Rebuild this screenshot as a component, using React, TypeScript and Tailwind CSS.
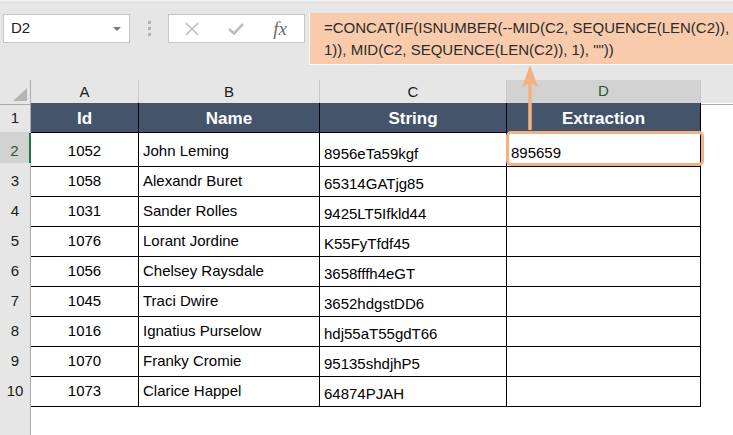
import React from "react";

type Person = {
  id: number;
  name: string;
  str: string;
  extraction: string;
};

const rows: Person[] = [
  { id: 1052, name: "John Leming", str: "8956eTa59kgf", extraction: "895659" },
  { id: 1058, name: "Alexandr Buret", str: "65314GATjg85", extraction: "" },
  { id: 1031, name: "Sander Rolles", str: "9425LT5Ifkld44", extraction: "" },
  { id: 1076, name: "Lorant Jordine", str: "K55FyTfdf45", extraction: "" },
  { id: 1056, name: "Chelsey Raysdale", str: "3658fffh4eGT", extraction: "" },
  { id: 1045, name: "Traci Dwire", str: "3652hdgstDD6", extraction: "" },
  { id: 1016, name: "Ignatius Purselow", str: "hdj55aT55gdT66", extraction: "" },
  { id: 1070, name: "Franky Cromie", str: "95135shdjhP5", extraction: "" },
  { id: 1073, name: "Clarice Happel", str: "64874PJAH", extraction: "" },
];

const cols = "grid grid-cols-[31px_108px_181px_187px_194px_1fr]";

const Toolbar = () => (
  <div className="h-[80px] bg-[#e6e6e6] relative">
    <div className="h-[3px] bg-gradient-to-b from-[#f7f7f7] to-[#dcdcdc]" />
    <div className="flex items-start pt-[11px] pl-[3px]">
      {/* name box */}
      <div className="w-[127px] h-[29px] bg-white border border-[#c6c6c6] flex items-center justify-between pl-[7px] pr-[8px] text-[15px] text-[#222]">
        <span>D2</span>
        <svg width="8" height="4" viewBox="0 0 8 4">
          <polygon points="0,0 8,0 4,4" fill="#777" />
        </svg>
      </div>
      <div className="w-[38px] h-[29px] flex flex-col items-center justify-center gap-[3px]">
        <div className="w-[3px] h-[3px] bg-[#b3b3b3]" />
        <div className="w-[3px] h-[3px] bg-[#b3b3b3]" />
        <div className="w-[3px] h-[3px] bg-[#b3b3b3]" />
      </div>
      {/* cancel / enter / fx */}
      <div className="w-[137px] h-[29px] bg-white border border-[#c6c6c6] flex items-center">
        <div className="w-[45px] flex justify-center">
          <svg width="14" height="14" viewBox="0 0 14 14">
            <path d="M1 1L13 13M13 1L1 13" stroke="#bdbdbd" strokeWidth="1.6" />
          </svg>
        </div>
        <div className="w-[44px] flex justify-center">
          <svg width="16" height="12" viewBox="0 0 16 12">
            <path d="M1 6L6 10.5L15 1" stroke="#bdbdbd" strokeWidth="2.6" fill="none" />
          </svg>
        </div>
        <div className="w-[44px] flex justify-center">
          <span className="font-['Liberation_Serif',serif] italic text-[19px] text-[#6b6b6b] leading-none">
            fx
          </span>
        </div>
      </div>
      {/* formula bar */}
      <div className="ml-[4px] flex-1 h-[52px] -mt-[1px] bg-[#f8cbad] border-l border-b border-white pl-[14px] pt-[4px] text-[15px] leading-[22px] text-[#2b2b2b]">
        <div>=CONCAT(IF(ISNUMBER(--MID(C2, SEQUENCE(LEN(C2)),</div>
        <div>1)), MID(C2, SEQUENCE(LEN(C2)), 1), ""))</div>
      </div>
    </div>
  </div>
);

const ColumnHeaders = () => (
  <div className={`${cols} h-[23px] bg-[#e6e6e6] text-[15px] text-[#1a1a1a]`}>
    <div className="relative border-r border-b border-[#ababab]">
      <svg className="absolute right-[3px] bottom-[3px]" width="14" height="13" viewBox="0 0 14 13">
        <polygon points="14,0 14,13 0,13" fill="#b5b5b5" />
      </svg>
    </div>
    <div className="border-r border-b border-[#c8c8c8] border-b-[#ababab] flex items-center justify-center">A</div>
    <div className="border-r border-b border-[#c8c8c8] border-b-[#ababab] flex items-center justify-center">B</div>
    <div className="border-r border-b border-[#c8c8c8] border-b-[#ababab] flex items-center justify-center">C</div>
    <div className="bg-[#d2d2d2] border-r border-[#c8c8c8] border-b-2 border-b-[#217346] flex items-center justify-center text-[#185c37]">
      D
    </div>
    <div className="border-b border-[#ababab]" />
  </div>
);

const App = () => {
  return (
    <div className="w-[733px] h-[435px] overflow-hidden bg-white relative font-['Liberation_Sans',Arial,sans-serif]">
      <Toolbar />
      <ColumnHeaders />

      {/* header row */}
      <div className={`${cols} h-[30px]`}>
        <div className="bg-[#e6e6e6] border-r border-b border-[#ababab] border-b-[#d0d0d0] flex items-center justify-center text-[15px] text-[#1a1a1a] pt-[2px]">
          1
        </div>
        {["Id", "Name", "String", "Extraction"].map((h) => (
          <div
            key={h}
            className="bg-[#44546a] border-r border-b border-black flex items-center justify-center pt-[3px] text-white font-bold text-[17px]"
          >
            {h}
          </div>
        ))}
        <div />
      </div>

      {rows.map((r, i) => {
        const active = i === 0;
        return (
          <div key={r.id} className={`${cols} h-[30px] text-[15px] text-black`}>
            <div
              className={`flex items-center justify-center pt-[3px] border-b border-b-[#d0d0d0] ${
                active
                  ? "bg-[#d2d2d2] border-r-2 border-r-[#217346] text-[#185c37]"
                  : "bg-[#e6e6e6] border-r border-r-[#ababab] text-[#1a1a1a]"
              }`}
            >
              {i + 2}
            </div>
            <div className="border-r border-b border-black flex items-center justify-center pt-[4px]">{r.id}</div>
            <div className="border-r border-b border-black flex items-center pl-[4px] pt-[4px]">{r.name}</div>
            <div className="border-r border-b border-black flex items-center pl-[4px] pt-[10px]">{r.str}</div>
            <div className="border-r border-b border-black flex items-center pl-[4px] pt-[8px]">{r.extraction}</div>
            <div />
          </div>
        );
      })}

      <div className={`${cols} h-[40px]`}>
        <div className="bg-[#e6e6e6] border-r border-[#ababab]" />
      </div>

      {/* highlight on D2 */}
      <div className="absolute left-[506px] top-[131px] w-[198px] h-[35px] border-[3px] border-[#f4b183] rounded-[5px]" />

      {/* arrow from D2 to the formula bar */}
      <svg className="absolute left-[518px] top-[64px]" width="24" height="68" viewBox="0 0 24 68">
        <line x1="12" y1="18" x2="12" y2="66" stroke="#f4b183" strokeWidth="3.5" />
        <polygon points="12,1 20,23 12,19 4,23" fill="#f4b183" />
      </svg>
    </div>
  );
};

export default App;
